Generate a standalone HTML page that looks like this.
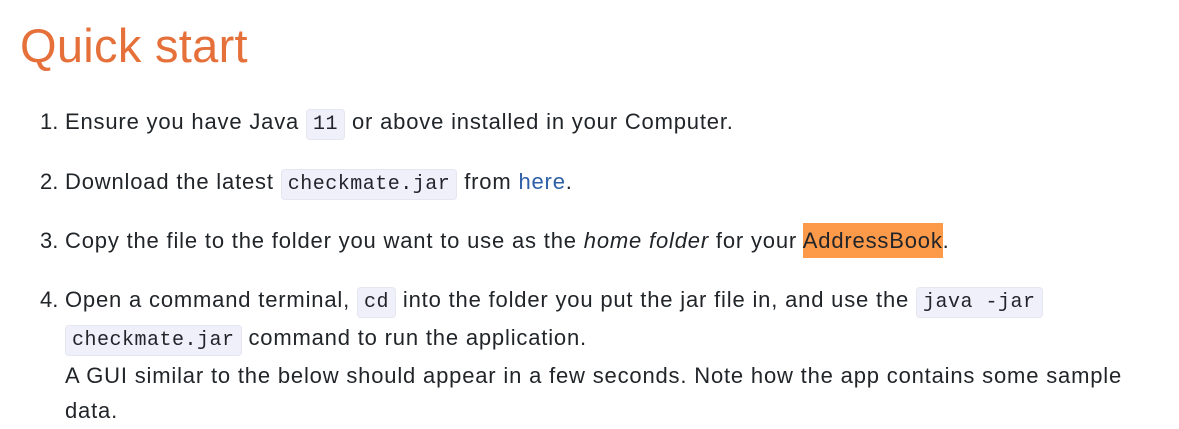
<!DOCTYPE html>
<html><head><meta charset="utf-8"><style>
html,body{margin:0;padding:0;background:#fff;width:1179px;height:429px;overflow:hidden}
body{font-family:"Liberation Sans","DejaVu Sans",sans-serif;color:#212529;font-size:22px;letter-spacing:0.82px}
h1{position:absolute;left:20px;top:18px;margin:0;font-weight:400;font-size:47px;color:#e5703a;letter-spacing:0.3px}
.l{position:absolute;left:40px;white-space:nowrap;line-height:36px}
.n{display:inline-block;width:25px;text-align:left;letter-spacing:0}
code{font-family:"Liberation Mono","DejaVu Sans Mono",monospace;font-size:20px;letter-spacing:0.5px;background:#f0f0fb;border:1px solid #e6e6f3;border-radius:4px;padding:3px 6px;color:#212529}
a{color:#2e5fa8;text-decoration:none}
mark{background:#fd9a4a;color:#212529;padding:5px 0}
</style></head><body>
<h1>Quick start</h1>
<div class="l" style="top:104px"><span class="n">1.</span>Ensure you have Java <code>11</code> or above installed in your Computer.</div>
<div class="l" style="top:164px"><span class="n">2.</span>Download the latest <code>checkmate.jar</code> from <a>here</a>.</div>
<div class="l" style="top:223px"><span class="n">3.</span>Copy the file to the folder you want to use as the <i>home folder</i> for your <mark>AddressBook</mark>.</div>
<div class="l" style="top:282px"><span class="n">4.</span>Open a command terminal, <code>cd</code> into the folder you put the jar file in, and use the <code>java -jar</code></div>
<div class="l" style="top:320px;left:65px"><code>checkmate.jar</code> command to run the application.</div>
<div class="l" style="top:358px;left:65px">A GUI similar to the below should appear in a few seconds. Note how the app contains some sample</div>
<div class="l" style="top:393px;left:65px">data.</div>
</body></html>
